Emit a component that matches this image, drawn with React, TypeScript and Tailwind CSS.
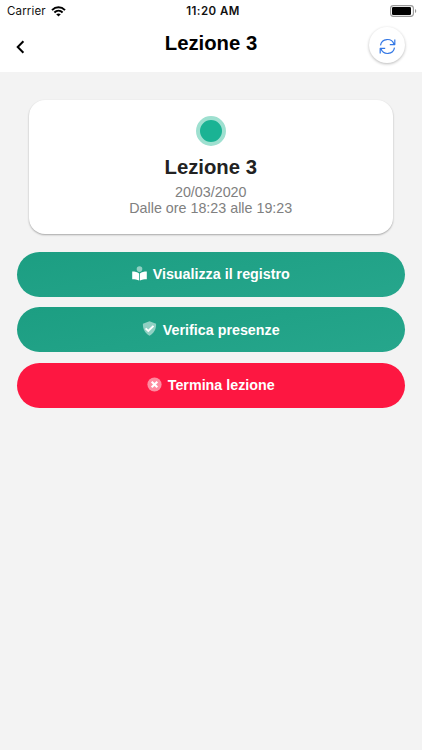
import React from "react";

function StatusBar() {
  return (
    <div className="grid h-[22px] grid-cols-3 items-center font-['Inter',sans-serif] text-[11.5px] leading-[22px] text-[#111]">
      <div className="flex items-center gap-[5px] pl-[7px] tracking-[0.15px]">
        <span>Carrier</span>
        <svg width="15" height="11" viewBox="0 0 15 11" fill="none" stroke="#000" strokeWidth="2">
          <path d="M1 4.1C4.8 .4 10.2 .4 14 4.1" />
          <path d="M3.4 6.5C5.8 4.2 9.2 4.2 11.6 6.5" />
          <path d="M7.5 10.6 5.2 8.3Q7.5 6.6 9.8 8.3Z" fill="#000" stroke="none" />
        </svg>
      </div>
      <div className="pl-[4px] text-center font-semibold tracking-[0.45px]">11:20 AM</div>
      <svg className="mr-[5px] justify-self-end" width="27" height="12" viewBox="0 0 27 12">
        <rect x=".6" y=".6" width="22.8" height="10.8" rx="2.8" fill="#fff" stroke="#999" strokeWidth="1.1" />
        <rect x="2" y="2" width="19" height="8" rx="1.3" fill="#000" />
        <path d="M25 4v4c1.7-.7 1.7-3.3 0-4Z" fill="#999" />
      </svg>
    </div>
  );
}

function ReaderIcon() {
  return (
    <svg className="-mt-[2px]" width="15" height="15" viewBox="0 0 15 15" fill="#fff">
      <circle cx="7.5" cy="3.1" r="2.8" opacity=".5" />
      <path d="M.2 5.6C3 5.6 5.4 6.2 7.1 7.4V14.4C5.2 13.7 3 13.4.2 13.3ZM14.8 5.6C12 5.6 9.6 6.2 7.9 7.4V14.4C9.8 13.7 12 13.4 14.8 13.3Z" />
    </svg>
  );
}

function ShieldIcon() {
  return (
    <svg className="-mt-[3px]" width="15" height="15" viewBox="0 0 15 15" fill="none">
      <path d="M7.5.3 14.1 2.8C14.3 8 12 12.5 7.5 14.7 3 12.5.7 8 .9 2.8Z" fill="#fff" opacity=".5" />
      <path d="m3.6 7.3 2.7 2.7L11.5 4.8" stroke="#fff" strokeWidth="1.9" />
    </svg>
  );
}

function CrossIcon() {
  return (
    <svg className="-mt-[2px]" width="15" height="15" viewBox="0 0 15 15" fill="none">
      <circle cx="7.5" cy="7.5" r="7.1" fill="#fff" opacity=".5" />
      <path d="m4.7 4.7 5.6 5.6m0-5.6-5.6 5.6" stroke="#fff" strokeWidth="2.1" />
    </svg>
  );
}

const buttonBase =
  "flex h-[44.8px] w-full items-center justify-center rounded-full text-[14.3px] font-bold leading-[18px] text-white";

export default function App() {
  return (
    <div className="min-h-[750px] w-full bg-[#f3f3f3] font-['Liberation_Sans',Arial,sans-serif]">
      <header className="h-[72px] bg-white">
        <StatusBar />
        <div className="grid h-[46px] grid-cols-[54px_1fr_54px] items-center">
          <button className="flex h-full items-center pl-4" aria-label="Indietro">
            <svg className="mt-[3px]" width="9" height="14" viewBox="0 0 9 14" fill="none" stroke="#000" strokeWidth="2">
              <path d="M7.4 1.2 1.7 7l5.7 5.8" />
            </svg>
          </button>
          <h1 className="-mt-1 text-center text-[20.3px] font-bold leading-6 text-black">Lezione 3</h1>
          <button
            className="ml-px flex h-9 w-9 items-center justify-center rounded-full bg-white shadow-[0_1px_3px_rgba(0,0,0,0.28)]"
            aria-label="Aggiorna"
          >
            <svg className="mt-[2px] ml-px" width="17" height="17" viewBox="0 0 17 17" fill="none" stroke="#3478e5" strokeWidth="1.2" strokeLinejoin="round">
              <path d="M1.5 7.3A7 7 0 0 1 15 6.2M15.8 1.4v5.2h-5M15.5 9.7A7 7 0 0 1 2 10.8M1.2 15.6v-5.2h5" />
            </svg>
          </button>
        </div>
      </header>
      <main className="pl-[16.5px] pr-[17px] pt-7">
        <section className="mx-3 flex h-[134px] flex-col items-center rounded-[16px] bg-white pt-4 shadow-[0_1px_2px_rgba(0,0,0,0.32)]">
          <div className="h-[30px] w-[30px] rounded-full border-4 border-[#9ee0d0] bg-[#1ab394]" />
          <h2 className="mt-[9px] text-[20.3px] font-bold leading-6 text-[#222]">Lezione 3</h2>
          <div className="mt-[5px] text-center text-[14.3px] leading-4 text-[#808080]">
            <p>20/03/2020</p>
            <p>Dalle ore 18:23 alle 19:23</p>
          </div>
        </section>
        <div className="mt-[18px] flex flex-col gap-[10.6px]">
          <button className={`${buttonBase} gap-[6px] bg-linear-[170deg] from-[#1c9e82] to-[#26a68c]`}>
            <ReaderIcon />
            <span>Visualizza il registro</span>
          </button>
          <button className={`${buttonBase} gap-[6px] bg-linear-[170deg] from-[#1c9e82] to-[#26a68c]`}>
            <ShieldIcon />
            <span>Verifica presenze</span>
          </button>
          <button className={`${buttonBase} gap-[6px] bg-[#fd1741]`}>
            <CrossIcon />
            <span>Termina lezione</span>
          </button>
        </div>
      </main>
    </div>
  );
}
